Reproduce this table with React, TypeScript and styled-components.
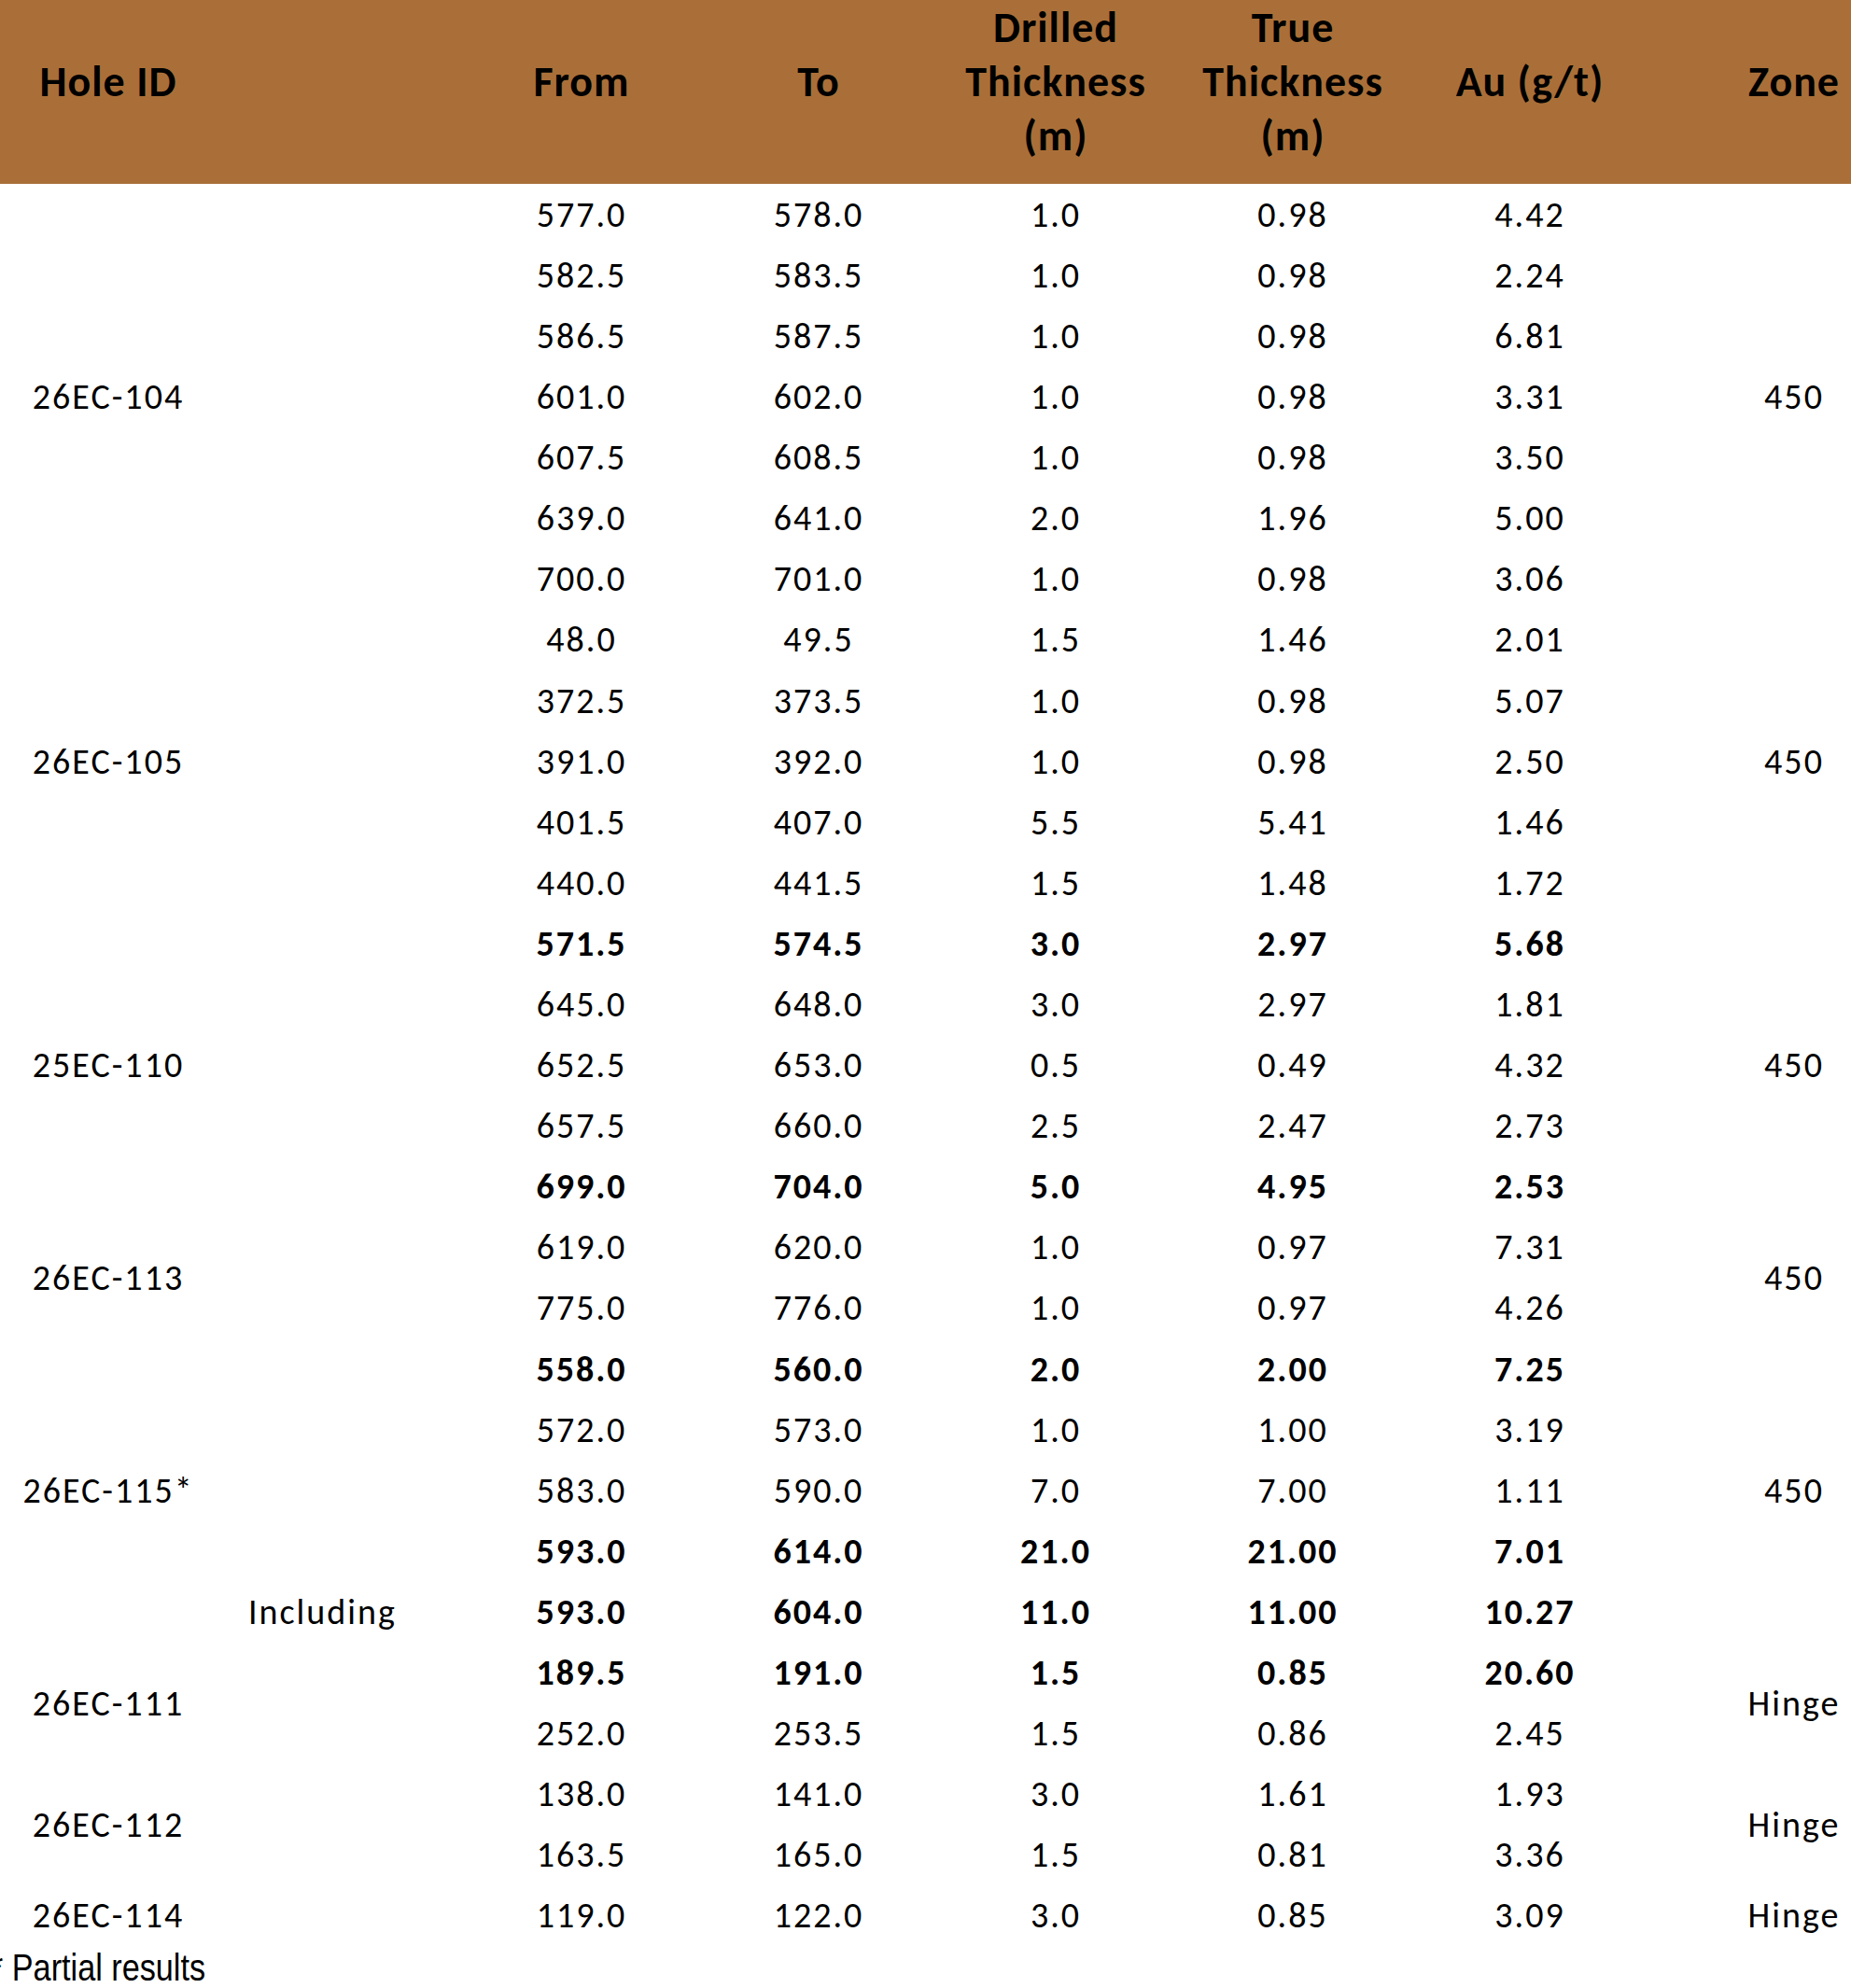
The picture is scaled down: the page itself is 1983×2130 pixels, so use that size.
import React from "react";
import styled, { createGlobalStyle } from "styled-components";

const Global = createGlobalStyle`
  html, body { margin: 0; padding: 0; background: #ffffff; }
  body { font-family: Carlito, Lato, "Open Sans", sans-serif; color: #000; }
`;

const COLS = "232px 264px repeat(5, 254px) 1fr";
const ROW_H = 65.1;

const Page = styled.div`
  width: 1983px;
  overflow: hidden;
`;

const HeaderBar = styled.div`
  display: grid;
  grid-template-columns: ${COLS};
  height: 197px;
  background: #aa6f38;
  box-sizing: border-box;
  padding-bottom: 26px;
`;

const HeadCell = styled.div<{ $padLeft?: number }>`
  display: flex;
  align-items: center;
  justify-content: center;
  text-align: center;
  font-family: Carlito, Lato, sans-serif;
  font-weight: 700;
  font-size: 46px;
  letter-spacing: 1px;
  line-height: 58px;
  padding-left: ${(p) => p.$padLeft ?? 0}px;
`;

const Body = styled.div`
  display: grid;
  grid-template-columns: ${COLS};
  grid-template-rows: repeat(29, ${ROW_H}px);
`;

const Cell = styled.div<{ $col: number; $row: number; $span?: number; $bold?: boolean; $padLeft?: number; $left?: boolean }>`
  grid-column: ${(p) => p.$col};
  grid-row: ${(p) => p.$row} / span ${(p) => p.$span ?? 1};
  display: flex;
  align-items: center;
  justify-content: ${(p) => (p.$left ? "flex-start" : "center")};
  padding-left: ${(p) => p.$padLeft ?? 0}px;
  padding-top: 2px;
  font-family: Carlito, Lato, sans-serif;
  font-size: 38px;
  letter-spacing: 2px;
  font-weight: ${(p) => (p.$bold ? 700 : 400)};
  line-height: 1.2;
  white-space: nowrap;
`;

const Footnote = styled.div`
  font-family: "Liberation Sans", Arial, sans-serif;
  font-size: 40px;
  line-height: 46px;
  margin-left: -10px;
  transform: scaleX(0.855);
  transform-origin: left center;
  white-space: nowrap;
`;

type Row = { v: string[]; bold?: boolean; label?: string };
type Group = { id: string; zone: string; rows: Row[] };

const groups: Group[] = [
  {
    id: "26EC-104",
    zone: "450",
    rows: [
      { v: ["577.0", "578.0", "1.0", "0.98", "4.42"] },
      { v: ["582.5", "583.5", "1.0", "0.98", "2.24"] },
      { v: ["586.5", "587.5", "1.0", "0.98", "6.81"] },
      { v: ["601.0", "602.0", "1.0", "0.98", "3.31"] },
      { v: ["607.5", "608.5", "1.0", "0.98", "3.50"] },
      { v: ["639.0", "641.0", "2.0", "1.96", "5.00"] },
      { v: ["700.0", "701.0", "1.0", "0.98", "3.06"] },
    ],
  },
  {
    id: "26EC-105",
    zone: "450",
    rows: [
      { v: ["48.0", "49.5", "1.5", "1.46", "2.01"] },
      { v: ["372.5", "373.5", "1.0", "0.98", "5.07"] },
      { v: ["391.0", "392.0", "1.0", "0.98", "2.50"] },
      { v: ["401.5", "407.0", "5.5", "5.41", "1.46"] },
      { v: ["440.0", "441.5", "1.5", "1.48", "1.72"] },
    ],
  },
  {
    id: "25EC-110",
    zone: "450",
    rows: [
      { v: ["571.5", "574.5", "3.0", "2.97", "5.68"], bold: true },
      { v: ["645.0", "648.0", "3.0", "2.97", "1.81"] },
      { v: ["652.5", "653.0", "0.5", "0.49", "4.32"] },
      { v: ["657.5", "660.0", "2.5", "2.47", "2.73"] },
      { v: ["699.0", "704.0", "5.0", "4.95", "2.53"], bold: true },
    ],
  },
  {
    id: "26EC-113",
    zone: "450",
    rows: [
      { v: ["619.0", "620.0", "1.0", "0.97", "7.31"] },
      { v: ["775.0", "776.0", "1.0", "0.97", "4.26"] },
    ],
  },
  {
    id: "26EC-115*",
    zone: "450",
    rows: [
      { v: ["558.0", "560.0", "2.0", "2.00", "7.25"], bold: true },
      { v: ["572.0", "573.0", "1.0", "1.00", "3.19"] },
      { v: ["583.0", "590.0", "7.0", "7.00", "1.11"] },
      { v: ["593.0", "614.0", "21.0", "21.00", "7.01"], bold: true },
      { v: ["593.0", "604.0", "11.0", "11.00", "10.27"], bold: true, label: "Including" },
    ],
  },
  {
    id: "26EC-111",
    zone: "Hinge",
    rows: [
      { v: ["189.5", "191.0", "1.5", "0.85", "20.60"], bold: true },
      { v: ["252.0", "253.5", "1.5", "0.86", "2.45"] },
    ],
  },
  {
    id: "26EC-112",
    zone: "Hinge",
    rows: [
      { v: ["138.0", "141.0", "3.0", "1.61", "1.93"] },
      { v: ["163.5", "165.0", "1.5", "0.81", "3.36"] },
    ],
  },
  {
    id: "26EC-114",
    zone: "Hinge",
    rows: [{ v: ["119.0", "122.0", "3.0", "0.85", "3.09"] }],
  },
];

export default function App() {
  const cells: React.ReactNode[] = [];
  let row = 1;
  groups.forEach((g) => {
    const n = g.rows.length;
    cells.push(
      <Cell key={`id-${g.id}`} $col={1} $row={row} $span={n}>
        {g.id}
      </Cell>
    );
    cells.push(
      <Cell key={`z-${g.id}`} $col={8} $row={row} $span={n} $padLeft={95}>
        {g.zone}
      </Cell>
    );
    g.rows.forEach((r, i) => {
      const rr = row + i;
      if (r.label) {
        cells.push(
          <Cell key={`l-${rr}`} $col={2} $row={rr} $left $padLeft={34}>
            {r.label}
          </Cell>
        );
      }
      r.v.forEach((val, j) => {
        cells.push(
          <Cell key={`c-${rr}-${j}`} $col={3 + j} $row={rr} $bold={r.bold}>
            {val}
          </Cell>
        );
      });
    });
    row += n;
  });

  return (
    <Page>
      <Global />
      <HeaderBar>
        <HeadCell>Hole ID</HeadCell>
        <HeadCell />
        <HeadCell>From</HeadCell>
        <HeadCell>To</HeadCell>
        <HeadCell>
          Drilled
          <br />
          Thickness
          <br />
          (m)
        </HeadCell>
        <HeadCell>
          True
          <br />
          Thickness
          <br />
          (m)
        </HeadCell>
        <HeadCell>Au (g/t)</HeadCell>
        <HeadCell $padLeft={95}>Zone</HeadCell>
      </HeaderBar>
      <Body>{cells}</Body>
      <Footnote>* Partial results</Footnote>
    </Page>
  );
}
